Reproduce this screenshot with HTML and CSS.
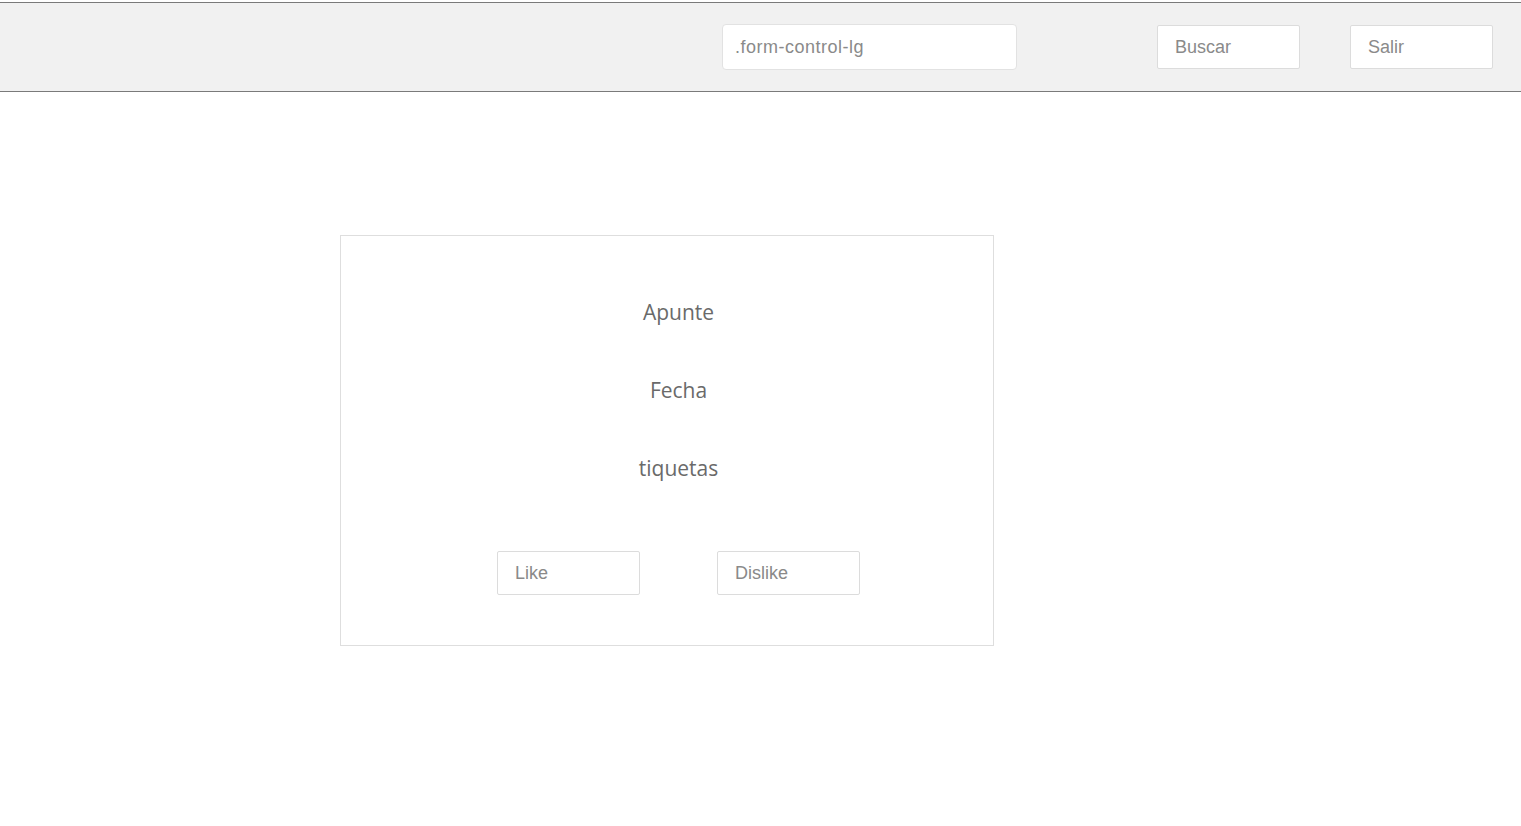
FILE: index.html
```html
<!DOCTYPE html>
<html lang="es">
<head>
<meta charset="utf-8">
<title>Apuntes</title>
<link rel="stylesheet" href="styles.css">
</head>
<body>
<header class="topbar">
  <input class="search-input" type="text" placeholder=".form-control-lg">
  <button class="box-btn btn-buscar" type="button">Buscar</button>
  <button class="box-btn btn-salir" type="button">Salir</button>
</header>
<main class="content">
  <section class="card">
    <p class="field">Apunte</p>
    <p class="field">Fecha</p>
    <p class="field">tiquetas</p>
    <div class="actions">
      <button class="box-btn" type="button">Like</button>
      <button class="box-btn" type="button">Dislike</button>
    </div>
  </section>
</main>
</body>
</html>
```

FILE: styles.css
```css
html, body {
  margin: 0;
  padding: 0;
  background: #ffffff;
}
body {
  font-family: "Liberation Sans", Arial, sans-serif;
  padding-top: 2px;
}
.topbar {
  box-sizing: border-box;
  height: 90px;
  background: #f1f1f1;
  border-top: 1px solid #7a7a7a;
  border-bottom: 1px solid #7a7a7a;
  display: flex;
  align-items: center;
  justify-content: flex-end;
  padding-right: 28px;
}
.search-input {
  box-sizing: border-box;
  width: 295px;
  height: 46px;
  margin-right: 140px;
  padding: 0 12px;
  border: 1px solid #e2e2e2;
  border-radius: 4px;
  background: #fff;
  font-family: "Liberation Sans", Arial, sans-serif;
  font-size: 18px;
  letter-spacing: 0.5px;
  color: #555;
  outline: none;
}
.search-input::placeholder {
  color: #8a8a8a;
}
.box-btn {
  box-sizing: border-box;
  width: 143px;
  height: 44px;
  padding: 0 0 0 17px;
  text-align: left;
  background: #fff;
  border: 1px solid #dcdcdc;
  border-radius: 2px;
  font-family: "Liberation Sans", Arial, sans-serif;
  font-size: 18px;
  color: #8a8a8a;
  cursor: pointer;
}
.btn-buscar {
  margin-right: 50px;
}
.content {
  padding: 143px 0 0 340px;
}
.card {
  box-sizing: border-box;
  width: 654px;
  height: 411px;
  border: 1px solid #dedede;
  padding: 61px 0 0 23px;
  display: flex;
  flex-direction: column;
  align-items: center;
}
.field {
  margin: 0 0 48px 0;
  font-family: "Open Sans", "Noto Sans", sans-serif;
  font-size: 21px;
  line-height: 30px;
  color: #6a6a6a;
}
.field:last-of-type {
  margin-bottom: 68px;
}
.actions {
  display: flex;
  gap: 77px;
}
```
